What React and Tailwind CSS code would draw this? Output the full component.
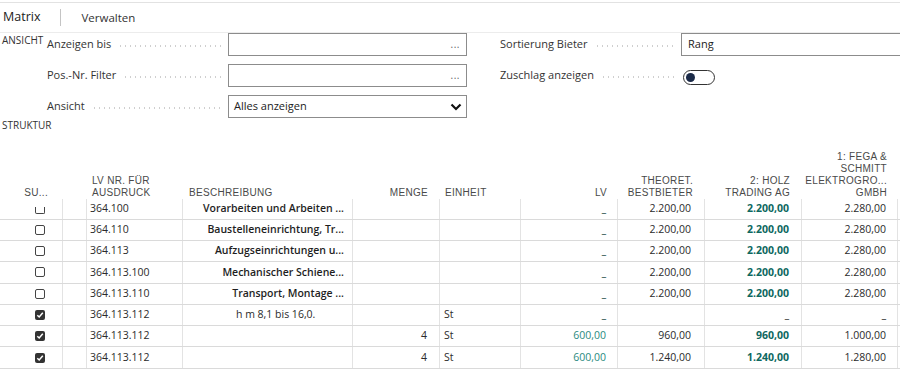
import React from 'react';

const cols = 'grid grid-cols-[63px_24px_96px_170px_87px_81px_97px_87px_97px_96px]';

const rows = [
  { state: 'partial', nr: '364.100', desc: 'Vorarbeiten und Arbeiten ...', bold: true, lv: '_', theo: '2.200,00', holz: '2.200,00', fega: '2.280,00' },
  { state: 'off', nr: '364.110', desc: 'Baustelleneinrichtung, Tr...', bold: true, lv: '_', theo: '2.200,00', holz: '2.200,00', fega: '2.280,00' },
  { state: 'off', nr: '364.113', desc: 'Aufzugseinrichtungen u...', bold: true, lv: '_', theo: '2.200,00', holz: '2.200,00', fega: '2.280,00' },
  { state: 'off', nr: '364.113.100', desc: 'Mechanischer Schiene...', bold: true, lv: '_', theo: '2.200,00', holz: '2.200,00', fega: '2.280,00' },
  { state: 'off', nr: '364.113.110', desc: 'Transport, Montage ...', bold: true, lv: '_', theo: '2.200,00', holz: '2.200,00', fega: '2.280,00' },
  { state: 'on', nr: '364.113.112', desc: 'h m 8,1 bis 16,0.', einheit: 'St', lv: '_', theo: '', holz: '_', fega: '_' },
  { state: 'on', nr: '364.113.112', desc: '', menge: '4', einheit: 'St', lv: '600,00', theo: '960,00', holz: '960,00', fega: '1.000,00' },
  { state: 'on', nr: '364.113.112', desc: '', menge: '4', einheit: 'St', lv: '600,00', theo: '1.240,00', holz: '1.240,00', fega: '1.280,00' }
];

function Check({ state }) {
  if (state === 'partial') {
    return (
      <div className="h-[10px] w-[10px] flex items-end">
        <div className="h-[7px] w-[10px] border-x-[1.5px] border-b-[1.5px] border-[#444] rounded-b-[2px]" />
      </div>
    );
  }
  if (state === 'on') {
    return (
      <div className="h-[10px] w-[10px] rounded-[2px] bg-[#333] flex items-center justify-center">
        <svg width="8" height="8" viewBox="0 0 8 8">
          <path d="M1.3 4.2 L3.2 6 L6.8 1.8" fill="none" stroke="#fff" strokeWidth="1.5" />
        </svg>
      </div>
    );
  }
  return <div className="h-[10px] w-[10px] rounded-[2px] border-[1.5px] border-[#444]" />;
}

function Leader() {
  return (
    <div className="flex-1 h-[2px] mt-[3px] mr-[6px] ml-[7px] bg-[radial-gradient(circle_at_center,#cfcfcf_0.6px,transparent_1px)] bg-[length:5px_2px] bg-repeat-x" />
  );
}

function Field({ label, children }) {
  return (
    <div className="flex items-center h-[23px]">
      <div className="w-[181px] flex items-center">
        <span className="text-[11px] text-[#333] whitespace-nowrap">{label}</span>
        <Leader />
      </div>
      {children}
    </div>
  );
}

export default function App() {
  return (
    <div className="w-[900px] h-[369px] overflow-hidden bg-white font-['Open_Sans',sans-serif] text-[#212121]">
      {/* tab bar */}
      <div className="mt-[2px] border-t border-[#e2e2e2]">
        <div className="h-[30px] flex items-center border-b border-[#ececec]">
          <span className="pl-[3px] text-[12.5px] text-[#1b1b1b]">Matrix</span>
          <div className="ml-[20px] w-px h-[17px] bg-[#c4c4c4]" />
          <span className="ml-[20px] text-[11.5px] text-[#333]">Verwalten</span>
        </div>
      </div>

      {/* Ansicht */}
      <div className="flex">
        <div className="w-[47px] pl-[2px] pt-[1px] text-[10px] leading-[12px] text-[#333]">ANSICHT</div>
        <div className="w-[420px] flex flex-col gap-[8px]">
          <Field label="Anzeigen bis">
            <div className="w-[239px] h-[23px] border border-[#8c8c8c] flex items-center justify-end pr-[6px] text-[10px] text-[#666] tracking-[0.5px]">...</div>
          </Field>
          <Field label="Pos.-Nr. Filter">
            <div className="w-[239px] h-[23px] border border-[#8c8c8c] flex items-center justify-end pr-[6px] text-[10px] text-[#666] tracking-[0.5px]">...</div>
          </Field>
          <Field label="Ansicht">
            <div className="w-[239px] h-[23px] border border-[#8c8c8c] flex items-center justify-between pl-[5px] pr-[4px] text-[11px] text-[#222]">
              <span>Alles anzeigen</span>
              <svg width="12" height="8" viewBox="0 0 12 8">
                <path d="M1.5 1.5 L6 6 L10.5 1.5" fill="none" stroke="#111" strokeWidth="2.2" />
              </svg>
            </div>
          </Field>
        </div>
        <div className="ml-[33px] w-[400px] flex flex-col gap-[8px]">
          <Field label="Sortierung Bieter">
            <div className="flex-1 h-[23px] border-l border-t border-b border-[#8c8c8c] flex items-center pl-[6px] text-[11px] text-[#222]">Rang</div>
          </Field>
          <Field label="Zuschlag anzeigen">
            <div className="ml-[2px] mt-[4px] w-[32px] h-[15px] rounded-full border-[1.5px] border-[#333] flex items-center pl-[2px]">
              <div className="w-[9px] h-[9px] rounded-full bg-[#1b2a48]" />
            </div>
          </Field>
        </div>
      </div>

      <div className="pl-[2px] mt-[1px] text-[10px] leading-[12px] text-[#333]">STRUKTUR</div>

      {/* table header */}
      <div className={`${cols} h-[68px] items-end font-['Liberation_Sans',sans-serif] text-[10px] leading-[12px] uppercase tracking-[0.3px] text-[#4a4a4a]`}>
        <div className="text-right pr-[15px]">SU...</div>
        <div />
        <div className="pl-[5px]">LV Nr. für<br />Ausdruck</div>
        <div className="pl-[6px]">Beschreibung</div>
        <div className="text-right pr-[12px]">Menge</div>
        <div className="pl-[5px]">Einheit</div>
        <div className="text-right pr-[11px]">LV</div>
        <div className="text-right pr-[12px]">Theoret.<br />Bestbieter</div>
        <div className="text-right pr-[12px]">2: Holz<br />Trading AG</div>
        <div className="text-right pr-[11px]">1: Fega &amp;<br />Schmitt<br />Elektrogro...<br />GmbH</div>
      </div>

      {/* table body */}
      <div className="text-[10.5px] text-[#2b2b2b]">
        {rows.map((r, i) => (
          <div
            key={i}
            className={`${cols} ${i === 0 ? 'h-[20.7px]' : 'h-[21.3px]'} border-b border-[#dadada]`}
          >
            <div className="flex items-center justify-end pr-[17px] border-r border-[#e3e3e3]">
              <Check state={r.state} />
            </div>
            <div className="border-r border-[#e3e3e3]" />
            <div className="flex items-center pl-[3px] border-r border-[#e3e3e3]">{r.nr}</div>
            {r.bold ? (
              <div className="flex items-center justify-end pr-[8px] font-semibold text-[#1e1e1e] whitespace-nowrap border-r border-[#e3e3e3]">{r.desc}</div>
            ) : (
              <div className="flex items-center pl-[53px] whitespace-nowrap border-r border-[#e3e3e3]">{r.desc}</div>
            )}
            <div className="flex items-center justify-end pr-[12px] border-r border-[#e3e3e3]">{r.menge}</div>
            <div className="flex items-center pl-[4px] border-r border-[#e3e3e3]">{r.einheit}</div>
            <div className={`flex items-center justify-end pr-[11px] border-r border-[#e3e3e3] ${r.lv === '_' ? 'font-bold text-[#1f4f4b]' : 'text-[#2a8a80]'}`}>{r.lv}</div>
            <div className="flex items-center justify-end pr-[13px] border-r border-[#e3e3e3]">{r.theo}</div>
            <div className={`flex items-center justify-end pr-[12px] border-r border-[#e3e3e3] ${r.holz === '_' ? 'font-bold text-[#333]' : 'font-bold text-[#0d6860]'}`}>{r.holz}</div>
            <div className={`flex items-center justify-end pr-[11px] border-r border-[#e3e3e3] ${r.fega === '_' ? 'font-bold' : ''}`}>{r.fega}</div>
          </div>
        ))}
      </div>
    </div>
  );
}
